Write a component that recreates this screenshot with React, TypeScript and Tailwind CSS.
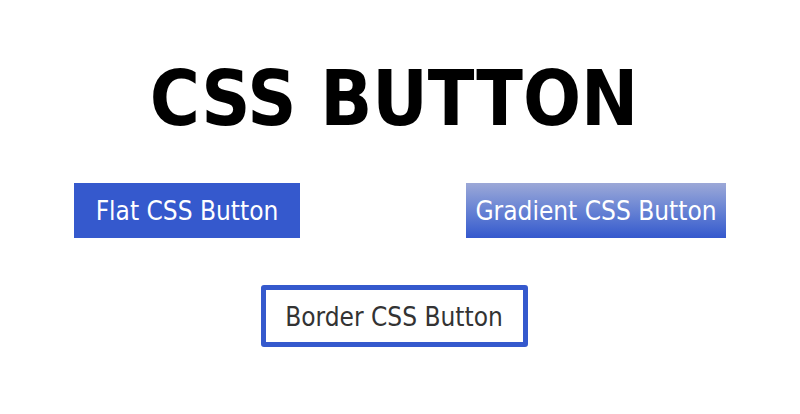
export default function App() {
  return (
    <main className="flex h-[414px] w-[800px] flex-col bg-white font-['DejaVu_Sans_Condensed','DejaVu_Sans',sans-serif]">
      <h1 className="mt-[54px] pr-[12px] text-center font-['DejaVu_Sans_Condensed','DejaVu_Sans',sans-serif] text-[76px] leading-[90px] font-bold text-black">
        CSS BUTTON
      </h1>
      <div className="mt-[39px] flex justify-between px-[74px]">
        <button className="flex h-[55px] w-[226px] items-center justify-center bg-[#3559cd] pt-[2px] text-[26px] text-white">
          Flat CSS Button
        </button>
        <button className="flex h-[55px] w-[260px] items-center justify-center bg-gradient-to-b from-[#9ca8d7] to-[#3558cd] pt-[2px] text-[26px] text-white">
          Gradient CSS Button
        </button>
      </div>
      <div className="mt-[47px] flex justify-center pr-[12px]">
        <button className="flex h-[62px] w-[267px] items-center justify-center rounded-[3px] border-[5px] border-[#3559cd] bg-white pt-[2px] text-[26px] text-[#333333]">
          Border CSS Button
        </button>
      </div>
    </main>
  );
}
